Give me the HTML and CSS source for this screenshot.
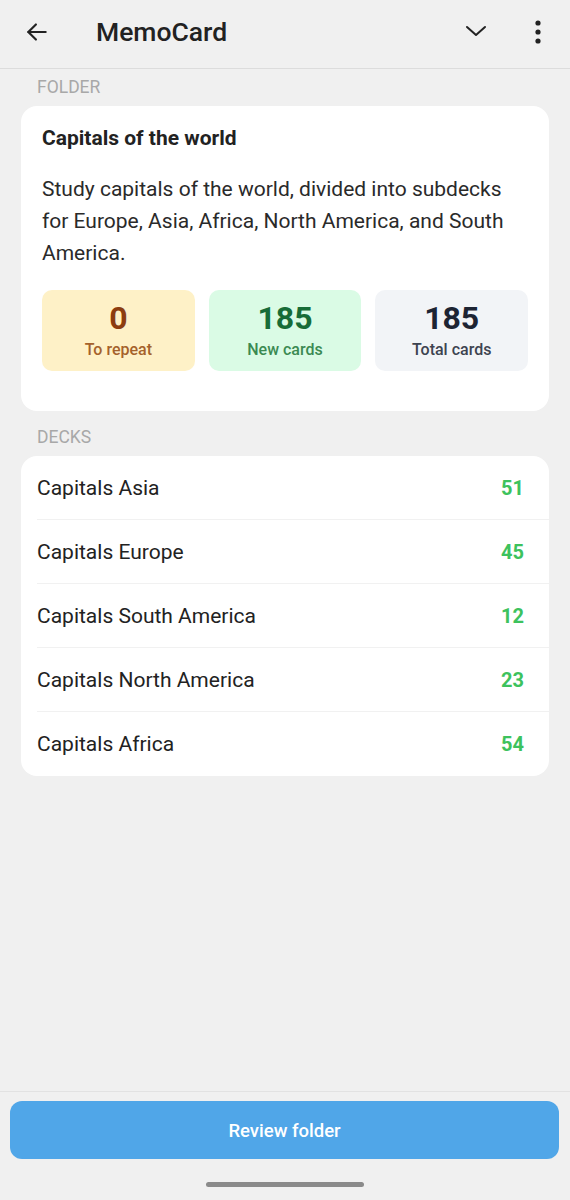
FILE: index.html
```html
<!DOCTYPE html>
<html lang="en">
<head>
    <meta charset="UTF-8">
    <meta name="viewport" content="width=device-width, initial-scale=1.0">
    <title>MemoCard</title>
    <link rel="stylesheet" href="styles.css">
</head>
<body>
    <div class="app">
        <header class="topbar">
            <button class="icon-btn back" aria-label="Back">
                <svg width="26" height="26" viewBox="0 0 24 24" fill="none" stroke="#222" stroke-width="2" stroke-linecap="round" stroke-linejoin="round">
                    <path d="M20 12H4"/>
                    <path d="M11 5l-7 7 7 7"/>
                </svg>
            </button>
            <h1 class="title">MemoCard</h1>
            <button class="icon-btn chevron" aria-label="Expand">
                <svg width="24" height="24" viewBox="0 0 24 24" fill="none" stroke="#222" stroke-width="2" stroke-linecap="round" stroke-linejoin="round">
                    <path d="M3 7l9 8 9-8"/>
                </svg>
            </button>
            <button class="icon-btn menu" aria-label="More">
                <svg width="8" height="24" viewBox="0 0 8 24" fill="#222">
                    <circle cx="4" cy="3" r="2.6"/>
                    <circle cx="4" cy="12" r="2.6"/>
                    <circle cx="4" cy="21" r="2.6"/>
                </svg>
            </button>
        </header>

        <main class="content">
            <div class="section-label">Folder</div>
            <section class="card folder">
                <h2 class="folder-title">Capitals of the world</h2>
                <p class="folder-desc">Study capitals of the world, divided into subdecks for Europe, Asia, Africa, North America, and South America.</p>
                <div class="stats">
                    <div class="stat repeat">
                        <span class="stat-num">0</span>
                        <span class="stat-label">To repeat</span>
                    </div>
                    <div class="stat fresh">
                        <span class="stat-num">185</span>
                        <span class="stat-label">New cards</span>
                    </div>
                    <div class="stat total">
                        <span class="stat-num">185</span>
                        <span class="stat-label">Total cards</span>
                    </div>
                </div>
            </section>

            <div class="section-label decks-label">Decks</div>
            <section class="card decks">
                <div class="deck"><span class="deck-name">Capitals Asia</span><span class="deck-count">51</span></div>
                <div class="deck"><span class="deck-name">Capitals Europe</span><span class="deck-count">45</span></div>
                <div class="deck"><span class="deck-name">Capitals South America</span><span class="deck-count">12</span></div>
                <div class="deck"><span class="deck-name">Capitals North America</span><span class="deck-count">23</span></div>
                <div class="deck"><span class="deck-name">Capitals Africa</span><span class="deck-count">54</span></div>
            </section>
        </main>

        <footer class="bottom">
            <button class="review-btn">Review folder</button>
            <div class="home-bar"></div>
        </footer>
    </div>
</body>
</html>
```

FILE: styles.css
```css
* {
    box-sizing: border-box;
}

body {
    margin: 0;
    background-color: #f0f0f0;
    font-family: Roboto, 'Noto Sans', sans-serif;
    color: #222;
}

.app {
    display: flex;
    flex-direction: column;
    min-height: 100vh;
}

button {
    font-family: inherit;
    border: none;
    background: none;
    padding: 0;
    cursor: pointer;
}

/* top bar */
.topbar {
    height: 69px;
    display: flex;
    align-items: center;
    border-bottom: 1px solid #dcdcdc;
    padding: 0 20px 5px 23px;
}
.icon-btn {
    display: flex;
    align-items: center;
    justify-content: center;
}
.back {
    width: 28px;
    height: 28px;
}
.title {
    margin: 0 0 0 45px;
    font-size: 26.5px;
    font-weight: 500;
    color: #222;
    flex: 1;
}
.chevron {
    width: 24px;
    height: 24px;
    margin-right: 46px;
}
.menu {
    width: 8px;
    height: 24px;
    margin-right: 8px;
}

/* content */
.content {
    flex: 1;
    padding: 0 21px;
}
.section-label {
    font-size: 17.5px;
    line-height: 20px;
    color: #a8a8a8;
    text-transform: uppercase;
    padding: 8px 16px 9px;
}
.decks-label {
    padding-top: 16px;
}
.card {
    background-color: #fff;
    border-radius: 16px;
}
.folder {
    padding: 21px 21px 40px;
}
.folder-title {
    margin: 0;
    font-size: 21px;
    line-height: 22px;
    font-weight: 700;
}
.folder-desc {
    margin: 24px 0 0;
    font-size: 21px;
    line-height: 32px;
    color: #2a2a2a;
    padding-right: 10px;
}
.stats {
    display: grid;
    grid-template-columns: repeat(3, 1fr);
    gap: 14px;
    margin-top: 21px;
}
.stat {
    height: 81px;
    border-radius: 10px;
    display: flex;
    flex-direction: column;
    align-items: center;
    padding-top: 10px;
}
.stat-num {
    font-size: 32px;
    line-height: 36px;
    font-weight: 700;
}
.stat-label {
    font-size: 16px;
    line-height: 20px;
    font-weight: 500;
    margin-top: 4px;
}
.repeat {
    background-color: #fef1c7;
}
.repeat .stat-num {
    color: #8c3d0f;
}
.repeat .stat-label {
    color: #a5622b;
}
.fresh {
    background-color: #dafbe5;
}
.fresh .stat-num {
    color: #176c37;
}
.fresh .stat-label {
    color: #3a8a52;
}
.total {
    background-color: #f2f4f7;
}
.total .stat-num {
    color: #1d2433;
}
.total .stat-label {
    color: #3d4350;
}

/* decks */
.decks {
    padding-left: 16px;
}
.deck {
    height: 64px;
    display: flex;
    align-items: center;
    justify-content: space-between;
    padding-right: 25px;
    border-bottom: 1px solid #f1f1f1;
    font-size: 21px;
}
.deck:last-child {
    border-bottom: none;
}
.deck-name {
    color: #222;
}
.deck-count {
    color: #3dc25d;
    font-weight: 700;
    font-size: 20px;
}

/* bottom */
.bottom {
    border-top: 1px solid #e2e2e2;
    padding: 9px 11px 13px 10px;
    display: flex;
    flex-direction: column;
    align-items: center;
}
.review-btn {
    width: 100%;
    height: 58px;
    border-radius: 12px;
    background-color: #50a6e8;
    color: #fff;
    font-size: 18.5px;
    font-weight: 500;
    padding-top: 2px;
}
.home-bar {
    width: 158px;
    height: 5px;
    border-radius: 3px;
    background-color: #8a8a8a;
    margin-top: 23px;
}
```
